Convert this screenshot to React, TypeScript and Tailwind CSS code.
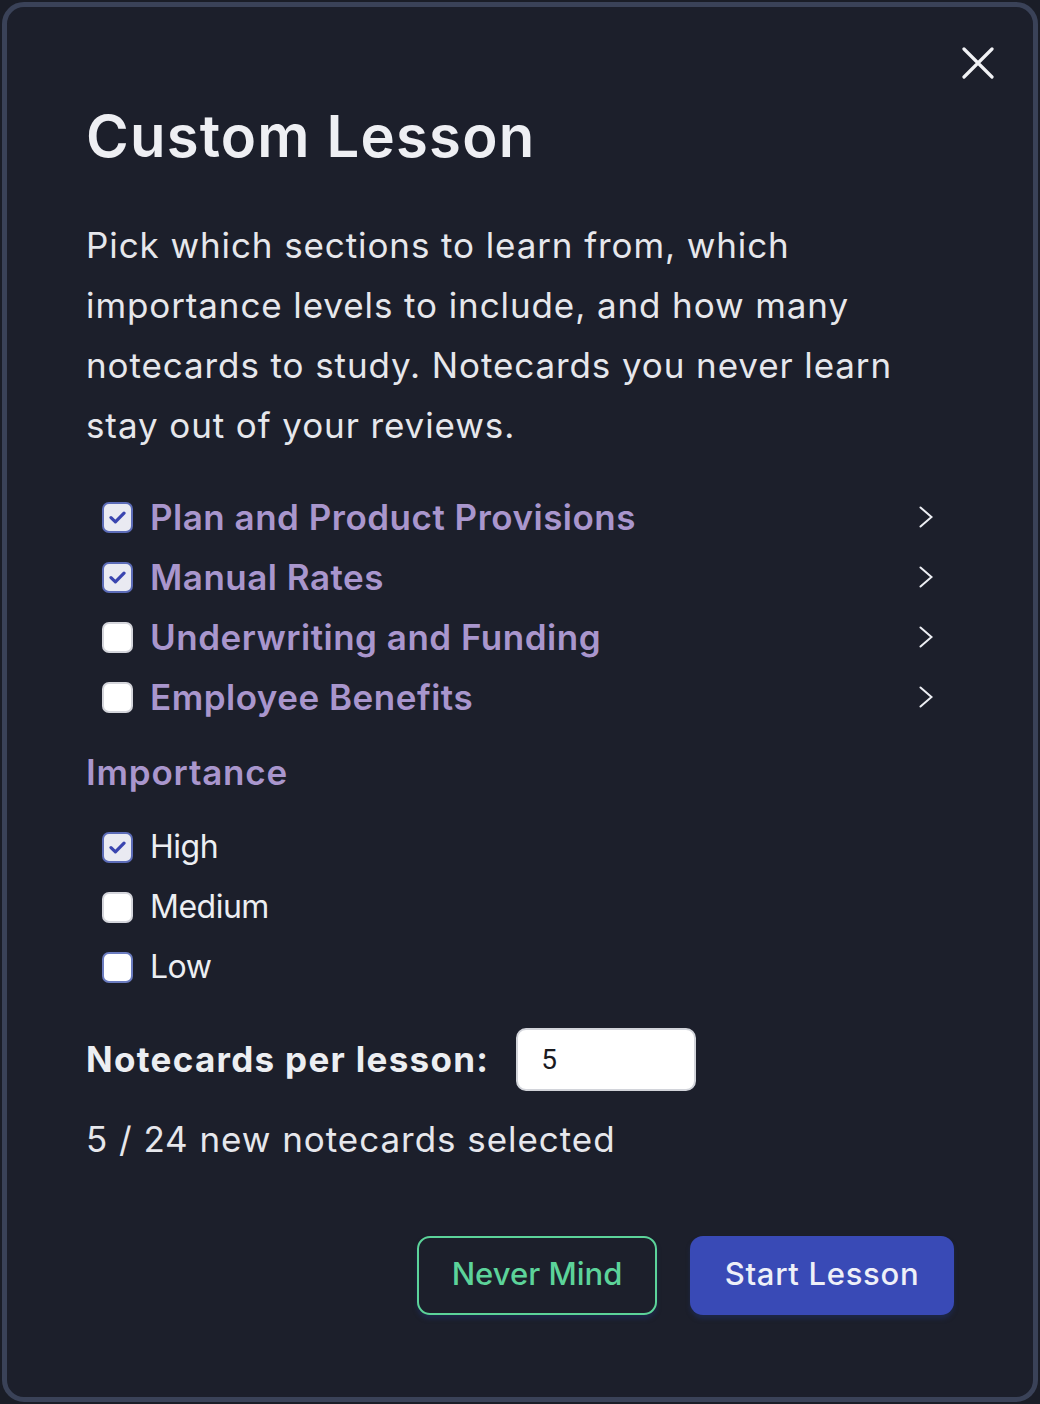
import { useState } from "react";

const sections = [
  { name: "Plan and Product Provisions", checked: true },
  { name: "Manual Rates", checked: true },
  { name: "Underwriting and Funding", checked: false },
  { name: "Employee Benefits", checked: false },
];

const levels = [
  { name: "High", checked: true, focus: false },
  { name: "Medium", checked: false, focus: false },
  { name: "Low", checked: false, focus: true },
];

function Box({ checked, focus }: { checked: boolean; focus?: boolean }) {
  return (
    <span
      className={`flex h-[31px] w-[31px] shrink-0 items-center justify-center rounded-[7px] border-2 ${
        checked
          ? "border-[#5c6cb8] bg-[#e9eaf2]"
          : focus
            ? "border-[#6b7cc0] bg-white"
            : "border-[#d4d5db] bg-white"
      }`}
    >
      {checked && (
        <svg width="17" height="13" viewBox="0 0 17 13" fill="none">
          <path
            d="M2 6.6 6.4 10.8 15 2.2"
            stroke="#3a45b0"
            strokeWidth="3.2"
            strokeLinecap="round"
            strokeLinejoin="round"
          />
        </svg>
      )}
    </span>
  );
}

function Chevron() {
  return (
    <svg width="14" height="22" viewBox="0 0 14 22" fill="none">
      <path d="M1.5 1.5 12.5 11 1.5 20.5" stroke="#eceef3" strokeWidth="2" strokeLinecap="round" />
    </svg>
  );
}

export default function App() {
  const [count, setCount] = useState("5");

  return (
    <div
      className="min-h-screen bg-[#1a1d27] p-[2px]"
      style={{ fontFamily: "Inter, 'Noto Sans', sans-serif" }}
    >
      <div className="relative h-[1400px] w-[1036px] rounded-[22px] border-[5px] border-[#3a4258] bg-[#1c1f2b] pl-[79px] pr-[79px] pt-[100px]">
        {/* close */}
        <button type="button" className="absolute right-[39px] top-[40px]" title="Close">
          <svg width="32" height="32" viewBox="0 0 32 32" fill="none">
            <path d="M2 2 30 30M30 2 2 30" stroke="#f1f2f5" strokeWidth="3.2" strokeLinecap="round" />
          </svg>
        </button>

        <h2 className="text-[58px] font-semibold leading-none tracking-[1.2px] text-[#eeeff3]">
          Custom Lesson
        </h2>

        <p className="mt-[50px] text-[35px] leading-[60px] tracking-[0.9px] text-[#e6e7ec]">
          Pick which sections to learn from, which importance levels to include, and how many
          notecards to study. Notecards you never learn stay out of your reviews.
        </p>

        {/* sections */}
        <div className="mt-[32px]">
          {sections.map((s) => (
            <div key={s.name} className="flex h-[60px] items-center pl-[16px] pr-[21px]">
              <Box checked={s.checked} />
              <span className="ml-[17px] flex-1 text-[35px] font-semibold tracking-[0.5px] text-[#a996cd]">
                {s.name}
              </span>
              <Chevron />
            </div>
          ))}
        </div>

        <h3 className="mt-[15px] text-[35px] font-semibold leading-[60px] tracking-[0.8px] text-[#a996cd]">
          Importance
        </h3>

        <div className="mt-[15px]">
          {levels.map((l) => (
            <div key={l.name} className="flex h-[60px] items-center pl-[16px]">
              <Box checked={l.checked} focus={l.focus} />
              <span className="ml-[17px] text-[32px] tracking-[-0.5px] text-[#eceef2]">{l.name}</span>
            </div>
          ))}
        </div>

        {/* count */}
        <div className="mt-[31px] flex items-center">
          <span className="text-[35px] font-bold tracking-[1.3px] text-[#eceef2]">
            Notecards per lesson:
          </span>
          <input
            value={count}
            onChange={(e) => setCount(e.target.value)}
            className="ml-[27px] h-[63px] w-[180px] rounded-[10px] border-2 border-[#d2d4da] bg-white pl-[23px] text-[28px] text-[#1b1b1f] outline-none"
            style={{ fontFamily: "Roboto, sans-serif" }}
          />
        </div>

        <p className="mt-[18px] text-[35px] leading-[60px] tracking-[0.95px] text-[#e6e7ec]">
          5 / 24 new notecards selected
        </p>

        <div className="mt-[67px] flex justify-end gap-[33px]">
          <button
            type="button"
            className="h-[79px] w-[240px] rounded-[13px] border-2 border-[#5cd39a] pb-[2px] text-[31px] font-medium tracking-[0px] text-[#5cd39a] shadow-[0_4px_4px_rgba(30,45,90,0.6)]"
          >
            Never Mind
          </button>
          <button
            type="button"
            className="h-[79px] w-[264px] rounded-[13px] bg-[#394ab6] pb-[2px] text-[31px] font-medium tracking-[0.7px] text-[#eef0f8] shadow-[0_4px_4px_rgba(30,45,90,0.6)]"
          >
            Start Lesson
          </button>
        </div>
      </div>
    </div>
  );
}
